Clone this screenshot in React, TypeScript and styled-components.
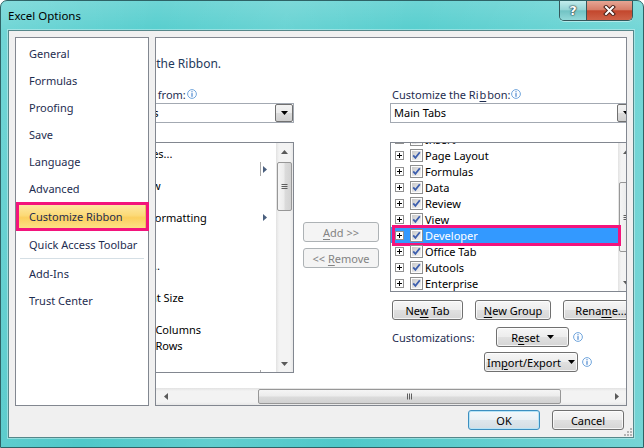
import React from 'react';
import styled, { createGlobalStyle, css } from 'styled-components';

const FONT = `'Noto Sans', 'Open Sans', 'DejaVu Sans', sans-serif`;

const GlobalStyle = createGlobalStyle`
  html, body { margin: 0; padding: 0; background: #ffffff; }
  body { font-family: ${FONT}; font-size: 11px; color: #000; }
  *, *::before, *::after { box-sizing: border-box; }
  u { text-decoration-thickness: 1px; text-underline-offset: 2px; }
`;

type Dir = 'up' | 'down' | 'left' | 'right';

const Triangle = ({ dir, size = 7, color = '#000' }: { dir: Dir; size?: number; color?: string }) => {
  const half = size / 2;
  const depth = Math.ceil(size / 2);
  const horiz = dir === 'left' || dir === 'right';
  const w = horiz ? depth : size;
  const h = horiz ? size : depth;
  const points = {
    down: `0,0 ${size},0 ${half},${depth}`,
    up: `0,${depth} ${size},${depth} ${half},0`,
    right: `0,0 ${depth},${half} 0,${size}`,
    left: `${depth},0 0,${half} ${depth},${size}`,
  }[dir];
  return (
    <svg width={w} height={h} viewBox={`0 0 ${w} ${h}`}>
      <polygon points={points} fill={color} />
    </svg>
  );
};

const InfoIcon = () => (
  <svg width="10" height="10" viewBox="0 0 10 10">
    <circle cx="5" cy="5" r="4.4" fill="#fbfdff" stroke="#72a6dc" strokeWidth="1" />
    <rect x="4.4" y="2.2" width="1.2" height="1.1" fill="#4f8ad0" />
    <rect x="4.4" y="4.1" width="1.2" height="3.7" fill="#4f8ad0" />
  </svg>
);

const CheckBox = () => (
  <svg width="13" height="13" viewBox="0 0 13 13">
    <defs>
      <linearGradient id="cbfill" x1="0" y1="0" x2="1" y2="1">
        <stop offset="0" stopColor="#c9c9c9" />
        <stop offset="1" stopColor="#f6f6f6" />
      </linearGradient>
    </defs>
    <rect x="0.5" y="0.5" width="12" height="12" fill="#fdfdfd" stroke="#8e8f8f" />
    <rect x="2" y="2" width="9" height="9" fill="url(#cbfill)" />
    <path d="M3.2 6.4 L5.4 8.9 L9.8 3.2" fill="none" stroke="#3d5fae" strokeWidth="1.8" />
  </svg>
);

const Expander = () => (
  <svg width="9" height="9" viewBox="0 0 9 9">
    <rect x="0.5" y="0.5" width="8" height="8" fill="#fff" stroke="#919191" />
    <path d="M2 4.5 H7 M4.5 2 V7" stroke="#000" strokeWidth="1" />
  </svg>
);

const GripLines = ({ vertical }: { vertical?: boolean }) =>
  vertical ? (
    <svg width="7" height="7" viewBox="0 0 7 7">
      <path d="M0.5 1.5 H6.5 M0.5 3.5 H6.5 M0.5 5.5 H6.5" stroke="#5e5e5e" strokeWidth="1" />
    </svg>
  ) : (
    <svg width="7" height="7" viewBox="0 0 7 7">
      <path d="M1.5 0.5 V6.5 M3.5 0.5 V6.5 M5.5 0.5 V6.5" stroke="#5e5e5e" strokeWidth="1" />
    </svg>
  );

const RibbonIcon = () => (
  <svg width="32" height="32" viewBox="0 0 32 32">
    <rect x="2.5" y="6.5" width="27" height="20" rx="2" fill="#e3ecf7" stroke="#7b97c2" />
    <rect x="3" y="7" width="26" height="6" fill="#a9c4e6" />
  </svg>
);

const CloseGlyph = () => (
  <svg width="13" height="11" viewBox="0 0 13 11">
    <path d="M3 2 L10 9 M10 2 L3 9" stroke="#4a2119" strokeWidth="4" strokeLinecap="square" />
    <path d="M3 2 L10 9 M10 2 L3 9" stroke="#ffffff" strokeWidth="2" strokeLinecap="square" />
  </svg>
);

const ResizeGrip = () => (
  <svg width="8" height="8" viewBox="0 0 8 8">
    {[
      [6, 0],
      [6, 3],
      [3, 3],
      [6, 6],
      [3, 6],
      [0, 6],
    ].map(([x, y]) => (
      <rect key={`${x}-${y}`} x={x} y={y} width="2" height="2" fill="#b4b4b4" />
    ))}
  </svg>
);

/* ---------- window chrome ---------- */

const Window = styled.div`
  width: 644px;
  height: 448px;
  border: 1px solid #2e6366;
  border-radius: 7px 7px 0 0;
  display: flex;
  flex-direction: column;
  overflow: hidden;
  background:
    linear-gradient(100deg, rgba(255, 255, 255, 0.16) 0%, rgba(255, 255, 255, 0) 22%,
      rgba(255, 255, 255, 0.1) 40%, rgba(255, 255, 255, 0) 58%, rgba(255, 255, 255, 0.22) 100%),
    linear-gradient(180deg, #6ed5d5 0%, #57cece 30px, #4fc8c9 100%);
`;

const TitleBar = styled.div`
  height: 29px;
  flex: none;
  display: flex;
  justify-content: space-between;
  padding: 0 10px 0 7px;
`;

const Title = styled.div`
  align-self: center;
  font-size: 11.5px;
  color: #000;
  padding-bottom: 1px;
`;

const CaptionGroup = styled.div`
  align-self: flex-start;
  display: flex;
  height: 20px;
  border: 1px solid #35575b;
  border-top: none;
  border-radius: 0 0 5px 5px;
  overflow: hidden;
  box-shadow: 0 1px 0 rgba(255, 255, 255, 0.45);
`;

const CaptionButton = styled.div<{ $close?: boolean }>`
  display: flex;
  align-items: center;
  justify-content: center;
  width: ${p => (p.$close ? 45 : 27)}px;
  color: #fff;
  font-weight: bold;
  font-size: 13px;
  font-family: 'DejaVu Sans', ${FONT};
  text-shadow: 0 0 1px #24393c, 0 0 1px #24393c, 0 0 2px #24393c;
  ${p =>
    p.$close
      ? css`
          background: linear-gradient(180deg, #e6a594 0%, #d77f6a 45%, #c3472d 52%, #cf6248 100%);
        `
      : css`
          border-right: 1px solid #35575b;
          background: linear-gradient(180deg, #c2ecec 0%, #97d6d7 45%, #72c3c4 52%, #93d9d9 100%);
        `}
`;

const Frame = styled.div`
  flex: 1;
  min-height: 0;
  display: flex;
  padding: 0 9px 9px 7px;
`;

const Client = styled.div`
  flex: 1;
  min-width: 0;
  position: relative;
  display: flex;
  flex-direction: column;
  background: #f0f0f0;
  border: 1px solid #55878a;
  box-shadow: 0 0 0 1px rgba(255, 255, 255, 0.35);
  padding: 6px 6px 7px 6px;
`;

const Grip = styled.div`
  position: absolute;
  right: 1px;
  bottom: 1px;
  line-height: 0;
`;

const Main = styled.div`
  display: flex;
  gap: 6px;
  height: 369px;
  min-width: 0;
`;

/* ---------- left navigation ---------- */

const Nav = styled.div`
  width: 134px;
  flex: none;
  display: flex;
  flex-direction: column;
  background: #fff;
  border: 1px solid #828790;
  padding-top: 2px;
`;

const NavItem = styled.div<{ $selected?: boolean }>`
  height: 27px;
  line-height: 27px;
  padding-left: 13px;
  color: #1e2d50;
  white-space: nowrap;
  ${p =>
    p.$selected &&
    css`
      position: relative;
      margin: 1px 2px;
      padding-left: 10px;
      line-height: 25px;
      border: 1px solid #e8c35c;
      border-radius: 2px;
      background: linear-gradient(180deg, #fde9a5 0%, #fcda78 45%, #fbcf5e 55%, #fde289 100%);
    `}
`;

const NavSeparator = styled.div`
  height: 1px;
  margin: 0 4px 1px 4px;
  background: #d5dfe5;
`;

const Callout = styled.div`
  position: absolute;
  border: 3px solid #f3147c;
  pointer-events: none;
`;

const NavCallout = styled(Callout)`
  top: -2px;
  left: -3px;
  right: -4px;
  bottom: -2px;
`;

/* ---------- right panel ---------- */

const Panel = styled.div`
  flex: 1;
  min-width: 0;
  display: flex;
  flex-direction: column;
  background: #fff;
  border: 1px solid #828790;
`;

const Viewport = styled.div`
  flex: 1;
  min-height: 0;
  overflow: hidden;
`;

const Scrolled = styled.div`
  margin-left: -102px;
  width: 700px;
`;

const Heading = styled.div`
  display: flex;
  align-items: center;
  gap: 8px;
  height: 32px;
  margin-top: 9px;
  font-size: 12px;
  color: #1e395b;
  white-space: nowrap;
`;

const Columns = styled.div`
  display: flex;
  align-items: flex-start;
  margin-top: 7px;
`;

const Column = styled.div<{ $width: number; $gap?: number }>`
  width: ${p => p.$width}px;
  flex: none;
  display: flex;
  flex-direction: column;
  margin-left: ${p => p.$gap ?? 0}px;
`;

const MoveColumn = styled(Column)`
  padding-top: 136px;
  gap: 6px;
`;

const Label = styled.div<{ $indent?: number }>`
  height: 16px;
  display: flex;
  align-items: center;
  gap: 1px;
  padding-left: ${p => p.$indent ?? 0}px;
  color: #1e2d50;
  white-space: nowrap;
`;

const Combo = styled.div`
  margin-top: 1px;
  height: 20px;
  display: flex;
  background: #fff;
  border: 1px solid #a3a9b2;
`;

const ComboText = styled.div<{ $pad: number }>`
  flex: 1;
  padding-left: ${p => p.$pad}px;
  line-height: 18px;
  white-space: nowrap;
  overflow: hidden;
`;

const ComboButton = styled.div`
  width: 18px;
  flex: none;
  display: flex;
  align-items: center;
  justify-content: center;
  border: 1px solid #707070;
  border-radius: 2px;
  background: linear-gradient(180deg, #f3f3f3 0%, #ebebeb 49%, #dcdcdc 50%, #cfcfcf 100%);
`;

const ListBox = styled.div<{ $height: number }>`
  margin-top: 19px;
  height: ${p => p.$height}px;
  display: flex;
  background: #fff;
  border: 1px solid #828790;
`;

const Rows = styled.div<{ $shift: number }>`
  flex: 1;
  min-width: 0;
  clip-path: inset(0 -6px 0 0);
  & > :first-child {
    margin-top: -${p => p.$shift}px;
  }
`;

const CommandRow = styled.div`
  height: 16px;
  display: flex;
  align-items: center;
  padding: 0 9px 0 32px;
  white-space: nowrap;
`;

const CommandText = styled.span`
  flex: 1;
`;

const SplitBar = styled.span`
  width: 1px;
  height: 14px;
  margin-right: 2px;
  background: #a7a7a7;
`;

const SubMenuArrow = styled.span`
  display: flex;
  line-height: 0;
`;

const TabRow = styled.div<{ $active?: boolean }>`
  position: relative;
  height: 16px;
  display: flex;
  align-items: center;
  padding-left: 4px;
  white-space: nowrap;
  color: ${p => (p.$active ? '#fff' : '#000')};
  background: ${p => (p.$active ? '#3399ff' : 'transparent')};
  & > svg:first-child {
    margin-right: 6px;
  }
  & > svg:nth-child(2) {
    margin-right: 2px;
  }
`;

const RowCallout = styled(Callout)`
  top: -2px;
  left: 1px;
  right: -3px;
  bottom: -3px;
`;

/* ---------- scroll bars ---------- */

const VBar = styled.div`
  width: 17px;
  flex: none;
  display: flex;
  flex-direction: column;
  background: linear-gradient(90deg, #e2e2e2 0%, #f3f3f3 18%, #f3f3f3 82%, #e8e8e8 100%);
`;

const HBar = styled.div`
  height: 17px;
  flex: none;
  display: flex;
  background: linear-gradient(180deg, #e2e2e2 0%, #f3f3f3 18%, #f3f3f3 82%, #e8e8e8 100%);
`;

const BarArrow = styled.div<{ $size: number }>`
  flex: none;
  width: ${p => p.$size}px;
  display: flex;
  align-items: center;
  justify-content: center;
  line-height: 0;
`;

const VArrow = styled.div`
  height: 17px;
  flex: none;
  display: flex;
  align-items: center;
  justify-content: center;
  line-height: 0;
`;

const Track = styled.div<{ $vertical?: boolean }>`
  flex: 1;
  display: flex;
  flex-direction: ${p => (p.$vertical ? 'column' : 'row')};
`;

const Thumb = styled.div<{ $vertical?: boolean }>`
  display: flex;
  align-items: center;
  justify-content: center;
  border: 1px solid #979797;
  border-radius: 2px;
  line-height: 0;
  ${p =>
    p.$vertical
      ? css`
          margin: 0 1px;
          background: linear-gradient(90deg, #f5f5f5 0%, #ececec 45%, #dbdbdb 55%, #d2d2d2 100%);
        `
      : css`
          margin: 1px 0;
          background: linear-gradient(180deg, #f5f5f5 0%, #ececec 45%, #dbdbdb 55%, #d2d2d2 100%);
        `}
`;

const VScroll = ({ offset, size }: { offset: number; size: number }) => (
  <VBar>
    <VArrow>
      <Triangle dir="up" color="#5a5a5a" />
    </VArrow>
    <Track $vertical>
      <Thumb $vertical style={{ marginTop: offset, height: size }}>
        <GripLines vertical />
      </Thumb>
    </Track>
    <VArrow>
      <Triangle dir="down" color="#5a5a5a" />
    </VArrow>
  </VBar>
);

/* ---------- buttons ---------- */

const Button = styled.div<{ $width: number; $disabled?: boolean; $default?: boolean }>`
  width: ${p => p.$width}px;
  height: 20px;
  flex: none;
  display: flex;
  align-items: center;
  justify-content: center;
  gap: 7px;
  white-space: nowrap;
  border: 1px solid #707070;
  border-radius: 3px;
  color: #000;
  background: linear-gradient(180deg, #f6f6f6 0%, #ededed 48%, #e0e0e0 52%, #d5d5d5 100%);
  box-shadow: inset 0 0 0 1px rgba(255, 255, 255, 0.75);
  ${p =>
    p.$default &&
    css`
      border-color: #3c8fc0;
      box-shadow: inset 0 0 0 1px #b6e4f7;
      background: linear-gradient(180deg, #f3f8fb 0%, #eaf1f5 48%, #dde6ec 52%, #d3dde4 100%);
    `}
  ${p =>
    p.$disabled &&
    css`
      border-color: #adb2b5;
      color: #838383;
      background: #f4f4f4;
      box-shadow: none;
    `}
`;

const ButtonRow = styled.div<{ $top: number; $indent?: number }>`
  display: flex;
  align-items: center;
  gap: 12px;
  margin-top: ${p => p.$top}px;
  padding-left: ${p => p.$indent ?? 2}px;
`;

const RowLabel = styled.div`
  width: 92px;
  flex: none;
  color: #1e2d50;
`;

const InfoSlot = styled.span`
  display: flex;
  margin-left: -8px;
`;

const Footer = styled.div`
  display: flex;
  justify-content: flex-end;
  gap: 12px;
  margin-top: 4px;
  padding-right: 3px;
`;

/* ---------- data ---------- */

const navTop = ['General', 'Formulas', 'Proofing', 'Save', 'Language', 'Advanced'];

type Command = { label: string; split?: boolean; sub?: boolean };
const commands: Command[] = [
  { label: 'Add or Remove Filters' },
  { label: 'All Chart Types...' },
  { label: 'Borders', split: true },
  { label: 'Calculate Now' },
  { label: 'Center' },
  { label: 'Conditional Formatting', sub: true },
  { label: 'Connections' },
  { label: 'Copy' },
  { label: 'Custom Sort...' },
  { label: 'Cut' },
  { label: 'Decrease Font Size' },
  { label: 'Delete Cells...' },
  { label: 'Delete Sheet Columns' },
  { label: 'Delete Sheet Rows' },
  { label: 'Email' },
  { label: 'Fill Color', split: true },
  { label: 'Filter' },
];

const tabs = ['Insert', 'Page Layout', 'Formulas', 'Data', 'Review', 'View', 'Developer', 'Office Tab', 'Kutools', 'Enterprise'];

export default function App() {
  return (
    <>
      <GlobalStyle />
      <Window>
        <TitleBar>
          <Title>Excel Options</Title>
          <CaptionGroup>
            <CaptionButton>?</CaptionButton>
            <CaptionButton $close>
              <CloseGlyph />
            </CaptionButton>
          </CaptionGroup>
        </TitleBar>
        <Frame>
          <Client>
            <Main>
              <Nav>
                {navTop.map(item => (
                  <NavItem key={item}>{item}</NavItem>
                ))}
                <NavItem $selected>
                  Customize Ribbon
                  <NavCallout />
                </NavItem>
                <NavItem>Quick Access Toolbar</NavItem>
                <NavSeparator />
                <NavItem>Add-Ins</NavItem>
                <NavItem>Trust Center</NavItem>
              </Nav>

              <Panel>
                <Viewport>
                  <Scrolled>
                    <Heading>
                      <RibbonIcon />
                      Customize the Ribbon.
                    </Heading>
                    <Columns>
                      <Column $width={240}>
                        <Label>
                          C<u>h</u>oose commands from:
                          <InfoIcon />
                        </Label>
                        <Combo>
                          <ComboText $pad={1}>Popular Commands</ComboText>
                          <ComboButton>
                            <Triangle dir="down" />
                          </ComboButton>
                        </Combo>
                        <ListBox $height={231}>
                          <Rows $shift={14}>
                            {commands.map(cmd => (
                              <CommandRow key={cmd.label}>
                                <CommandText>{cmd.label}</CommandText>
                                {cmd.split && <SplitBar />}
                                {(cmd.split || cmd.sub) && (
                                  <SubMenuArrow>
                                    <Triangle dir="right" size={7} color="#4a5f7e" />
                                  </SubMenuArrow>
                                )}
                              </CommandRow>
                            ))}
                          </Rows>
                          <VScroll offset={2} size={49} />
                        </ListBox>
                      </Column>

                      <MoveColumn $width={76} $gap={9}>
                        <Button $width={76} $disabled>
                          <span>
                            <u>A</u>dd &gt;&gt;
                          </span>
                        </Button>
                        <Button $width={76} $disabled>
                          <span>
                            &lt;&lt; <u>R</u>emove
                          </span>
                        </Button>
                      </MoveColumn>

                      <Column $width={246} $gap={11}>
                        <Label $indent={2}>
                          Customize the Ri<u>b</u>bon:
                          <InfoIcon />
                        </Label>
                        <Combo>
                          <ComboText $pad={3}>Main Tabs</ComboText>
                          <ComboButton>
                            <Triangle dir="down" />
                          </ComboButton>
                        </Combo>
                        <ListBox $height={150}>
                          <Rows $shift={12}>
                            {tabs.map(tab => (
                              <TabRow key={tab} $active={tab === 'Developer'}>
                                <Expander />
                                <CheckBox />
                                {tab}
                                {tab === 'Developer' && <RowCallout />}
                              </TabRow>
                            ))}
                          </Rows>
                          <VScroll offset={22} size={70} />
                        </ListBox>
                        <ButtonRow $top={8}>
                          <Button $width={71}>
                            <span>
                              Ne<u>w</u> Tab
                            </span>
                          </Button>
                          <Button $width={76}>
                            <span>
                              <u>N</u>ew Group
                            </span>
                          </Button>
                          <Button $width={76}>
                            <span>
                              Rena<u>m</u>e...
                            </span>
                          </Button>
                        </ButtonRow>
                        <ButtonRow $top={7}>
                          <RowLabel>Customizations:</RowLabel>
                          <Button $width={73}>
                            <span>
                              R<u>e</u>set
                            </span>
                            <Triangle dir="down" />
                          </Button>
                          <InfoSlot>
                            <InfoIcon />
                          </InfoSlot>
                        </ButtonRow>
                        <ButtonRow $top={5} $indent={94}>
                          <Button $width={94}>
                            <span>
                              Im<u>p</u>ort/Export
                            </span>
                            <Triangle dir="down" />
                          </Button>
                          <InfoSlot>
                            <InfoIcon />
                          </InfoSlot>
                        </ButtonRow>
                      </Column>
                    </Columns>
                  </Scrolled>
                </Viewport>
                <HBar>
                  <BarArrow $size={19}>
                    <Triangle dir="left" color="#5a5a5a" />
                  </BarArrow>
                  <Track>
                    <Thumb style={{ marginLeft: 83, width: 303 }}>
                      <GripLines />
                    </Thumb>
                  </Track>
                  <BarArrow $size={19}>
                    <Triangle dir="right" color="#5a5a5a" />
                  </BarArrow>
                </HBar>
              </Panel>
            </Main>
            <Footer>
              <Button $width={72} $default>
                OK
              </Button>
              <Button $width={72}>Cancel</Button>
            </Footer>
            <Grip>
              <ResizeGrip />
            </Grip>
          </Client>
        </Frame>
      </Window>
    </>
  );
}
